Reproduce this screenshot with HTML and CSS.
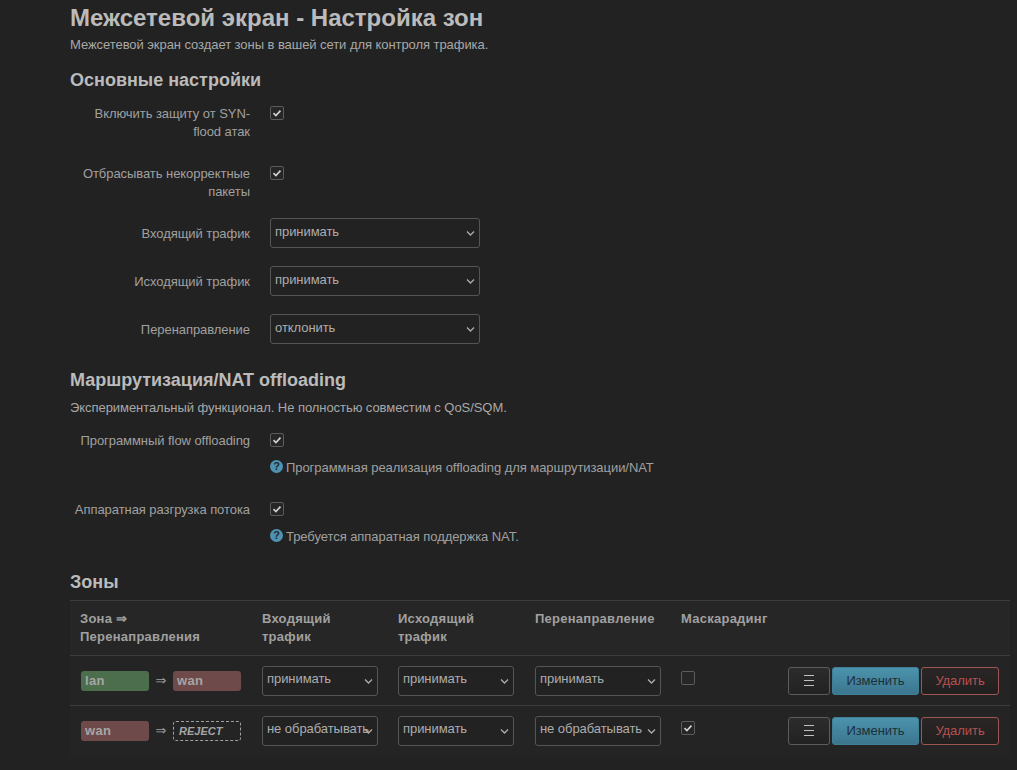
FILE: index.html
```html
<!DOCTYPE html>
<html lang="ru">
<head>
    <meta charset="UTF-8">
    <title>Межсетевой экран - Настройка зон</title>
    <link rel="stylesheet" href="styles.css">
</head>
<body>
    <div class="main">
        <h1>Межсетевой экран - Настройка зон</h1>
        <p class="descr">Межсетевой экран создает зоны в вашей сети для контроля трафика.</p>

        <h2 class="first">Основные настройки</h2>
        <div class="row tall">
            <label class="row-title">Включить защиту от SYN-flood атак</label>
            <div class="row-field"><input type="checkbox" class="check" checked></div>
        </div>
        <div class="row tall">
            <label class="row-title">Отбрасывать некорректные пакеты</label>
            <div class="row-field"><input type="checkbox" class="check" checked></div>
        </div>
        <div class="row select-row">
            <label class="row-title">Входящий трафик</label>
            <div class="row-field"><select class="wide"><option>принимать</option></select></div>
        </div>
        <div class="row select-row">
            <label class="row-title">Исходящий трафик</label>
            <div class="row-field"><select class="wide"><option>принимать</option></select></div>
        </div>
        <div class="row select-row">
            <label class="row-title">Перенаправление</label>
            <div class="row-field"><select class="wide"><option>отклонить</option></select></div>
        </div>

        <h2 class="second">Маршрутизация/NAT offloading</h2>
        <p class="descr sub">Экспериментальный функционал. Не полностью совместим с QoS/SQM.</p>
        <div class="row help-row">
            <label class="row-title">Программный flow offloading</label>
            <div class="row-field">
                <input type="checkbox" class="check" checked>
                <div class="help"><span class="help-icon">?</span>Программная реализация offloading для маршрутизации/NAT</div>
            </div>
        </div>
        <div class="row help-row">
            <label class="row-title">Аппаратная разгрузка потока</label>
            <div class="row-field">
                <input type="checkbox" class="check" checked>
                <div class="help"><span class="help-icon">?</span>Требуется аппаратная поддержка NAT.</div>
            </div>
        </div>

        <h2 class="third">Зоны</h2>
        <table class="zones">
            <thead>
                <tr>
                    <th class="col-zone">Зона ⇒ Перенаправления</th>
                    <th class="col-in">Входящий трафик</th>
                    <th class="col-out">Исходящий трафик</th>
                    <th class="col-fwd">Перенаправление</th>
                    <th class="col-masq">Маскарадинг</th>
                    <th></th>
                </tr>
            </thead>
            <tbody>
                <tr>
                    <td>
                        <div class="zone-cell">
                            <span class="zone lan">lan</span><span class="arrow">⇒</span><span class="zone wan">wan</span>
                        </div>
                    </td>
                    <td><select class="cell-select"><option>принимать</option></select></td>
                    <td><select class="cell-select"><option>принимать</option></select></td>
                    <td><select class="cell-select fwd"><option>принимать</option></select></td>
                    <td><input type="checkbox" class="check masq"></td>
                    <td>
                        <div class="actions">
                            <button class="btn btn-menu"><span class="burger"></span></button>
                            <button class="btn btn-edit">Изменить</button>
                            <button class="btn btn-del">Удалить</button>
                        </div>
                    </td>
                </tr>
                <tr>
                    <td>
                        <div class="zone-cell">
                            <span class="zone wan">wan</span><span class="arrow">⇒</span><span class="zone reject">REJECT</span>
                        </div>
                    </td>
                    <td><select class="cell-select"><option>не обрабатывать</option></select></td>
                    <td><select class="cell-select"><option>принимать</option></select></td>
                    <td><select class="cell-select fwd"><option>не обрабатывать</option></select></td>
                    <td><input type="checkbox" class="check masq" checked></td>
                    <td>
                        <div class="actions">
                            <button class="btn btn-menu"><span class="burger"></span></button>
                            <button class="btn btn-edit">Изменить</button>
                            <button class="btn btn-del">Удалить</button>
                        </div>
                    </td>
                </tr>
            </tbody>
        </table>
    </div>
</body>
</html>
```

FILE: styles.css
```css
html, body {
    height: 100%;
    overflow: hidden;
}
body {
    margin: 0;
    background-color: #222;
    color: #adadad;
    font-family: "Liberation Sans", Arial, sans-serif;
    font-size: 13px;
    letter-spacing: -0.06px;
}
.main {
    padding: 0 7px 0 70px;
}
h1 {
    margin: 0;
    padding-top: 5px;
    font-size: 24px;
    line-height: 26px;
    letter-spacing: 0;
    color: #bbb;
}
h2 {
    margin: 0;
    font-size: 18px;
    line-height: 22px;
    letter-spacing: 0;
    color: #bbb;
}
h2.first {
    margin-top: 16px;
}
h2.second {
    margin-top: 7px;
}
h2.third {
    margin-top: 2px;
}
.descr {
    margin: 6px 0 0;
    line-height: 16px;
    color: #a8a8a8;
}
.descr.sub {
    margin-top: 9px;
}
.row {
    display: flex;
}
.row-title {
    width: 180px;
    margin-right: 20px;
    padding-top: 1px;
    text-align: right;
    line-height: 18px;
    color: #a0a0a0;
}
.row.tall {
    height: 60px;
}
.first + .row {
    margin-top: 13px;
}
.select-row {
    height: 48px;
}
.select-row .row-title {
    padding-top: 7px;
}
.help-row {
    height: 69px;
}
.sub + .row {
    margin-top: 15px;
}
.row.tall + .select-row {
    margin-top: -6px;
}
.check {
    appearance: none;
    display: block;
    box-sizing: border-box;
    width: 14px;
    height: 14px;
    margin: 0;
    background-color: #262626;
    border: 1px solid #5c5c5c;
    border-radius: 2px;
}
.row-field .check {
    margin-top: 2px;
}
.check:checked {
    background-image: url("data:image/svg+xml,%3Csvg xmlns='http://www.w3.org/2000/svg' width='12' height='12'%3E%3Cpath d='M2.5 6.2l2.4 2.4 4.6-5' fill='none' stroke='%23d0d0d0' stroke-width='1.7'/%3E%3C/svg%3E");
    background-repeat: no-repeat;
    background-position: center;
}
select {
    appearance: none;
    box-sizing: border-box;
    font-family: inherit;
    font-size: 13px;
    letter-spacing: -0.06px;
    color: #adadad;
    background-color: #222;
    background-image: url("data:image/svg+xml,%3Csvg xmlns='http://www.w3.org/2000/svg' width='9' height='6'%3E%3Cpath d='M1 1.5l3.5 3.5 3.5-3.5' fill='none' stroke='%23adadad' stroke-width='1.3'/%3E%3C/svg%3E");
    background-repeat: no-repeat;
    background-position: right 4px center;
    border: 1px solid #555;
    border-radius: 3px;
    padding: 0 0 4px 4px;
}
select.wide {
    width: 210px;
    height: 30px;
}
select.cell-select {
    width: 116px;
    height: 30px;
}
select.cell-select.fwd {
    width: 126px;
}
.help {
    display: flex;
    align-items: center;
    margin-top: 13px;
    line-height: 16px;
    color: #a0a0a0;
}
.help-icon {
    display: inline-block;
    width: 13px;
    height: 13px;
    margin: -3px 3px 0 0;
    border-radius: 50%;
    background-color: #4d94b3;
    color: #1f2a30;
    font-size: 11px;
    font-weight: bold;
    line-height: 13px;
    text-align: center;
}
.zones {
    width: 940px;
    margin-top: 7px;
    border-collapse: collapse;
    table-layout: fixed;
}
.zones th {
    box-sizing: border-box;
    height: 55px;
    padding: 9px 10px 0;
    background-color: #262626;
    border-top: 1px solid #3c3c3c;
    border-bottom: 1px solid #3c3c3c;
    text-align: left;
    vertical-align: top;
    line-height: 18px;
    font-size: 13px;
    letter-spacing: 0.25px;
    color: #a0a0a0;
}
.zones td {
    box-sizing: border-box;
    height: 50px;
    padding: 0 0 0 10px;
    background-color: #242424;
    border-bottom: 1px solid #3c3c3c;
}
.zones tr:last-child td {
    border-bottom: 0;
}
.col-zone {
    width: 182px;
}
.col-in {
    width: 136px;
}
.col-out {
    width: 137px;
}
.col-fwd {
    width: 146px;
}
.col-masq {
    width: 100px;
}
.zone-cell {
    display: flex;
    align-items: center;
    margin: 0 0 0 1px;
}
.zone {
    box-sizing: border-box;
    width: 68px;
    height: 20px;
    padding-left: 4px;
    border-radius: 3px;
    font-size: 13px;
    font-weight: bold;
    line-height: 20px;
    letter-spacing: 0.3px;
    color: #a5a5a5;
}
.lan {
    background-color: #4c6e4c;
}
.wan {
    background-color: #6f4a4a;
}
.reject {
    padding-left: 5px;
    border: 1px dashed #a0a0a0;
    font-size: 11px;
    font-style: italic;
    line-height: 18px;
    letter-spacing: 0;
}
.arrow {
    width: 24px;
    text-align: center;
    font-family: "DejaVu Sans", sans-serif;
    font-size: 13px;
    color: #a0a0a0;
}
.check.masq {
    margin-bottom: 5px;
}
.actions {
    display: flex;
    justify-content: flex-end;
    gap: 2px;
    padding-right: 11px;
}
.btn {
    box-sizing: border-box;
    height: 28px;
    padding: 0;
    border-radius: 3px;
    font-family: inherit;
    font-size: 13px;
    letter-spacing: -0.06px;
}
.btn-menu {
    width: 42px;
    background: linear-gradient(#2c2c2c, #222);
    border: 1px solid #5c5c5c;
}
.burger {
    display: block;
    width: 10px;
    height: 9px;
    margin: 0 auto;
    border-top: 1px solid #c0c0c0;
    border-bottom: 1px solid #c0c0c0;
    background: linear-gradient(#c0c0c0, #c0c0c0) center / 100% 1px no-repeat;
}
.btn-edit {
    width: 87px;
    background: linear-gradient(#4c93ad, #3b768e);
    border: 1px solid #3f7f98;
    color: #1d2f38;
}
.btn-del {
    width: 78px;
    background: linear-gradient(#2a2626, #221f1f);
    border: 1px solid #a05555;
    color: #b85050;
}
```
